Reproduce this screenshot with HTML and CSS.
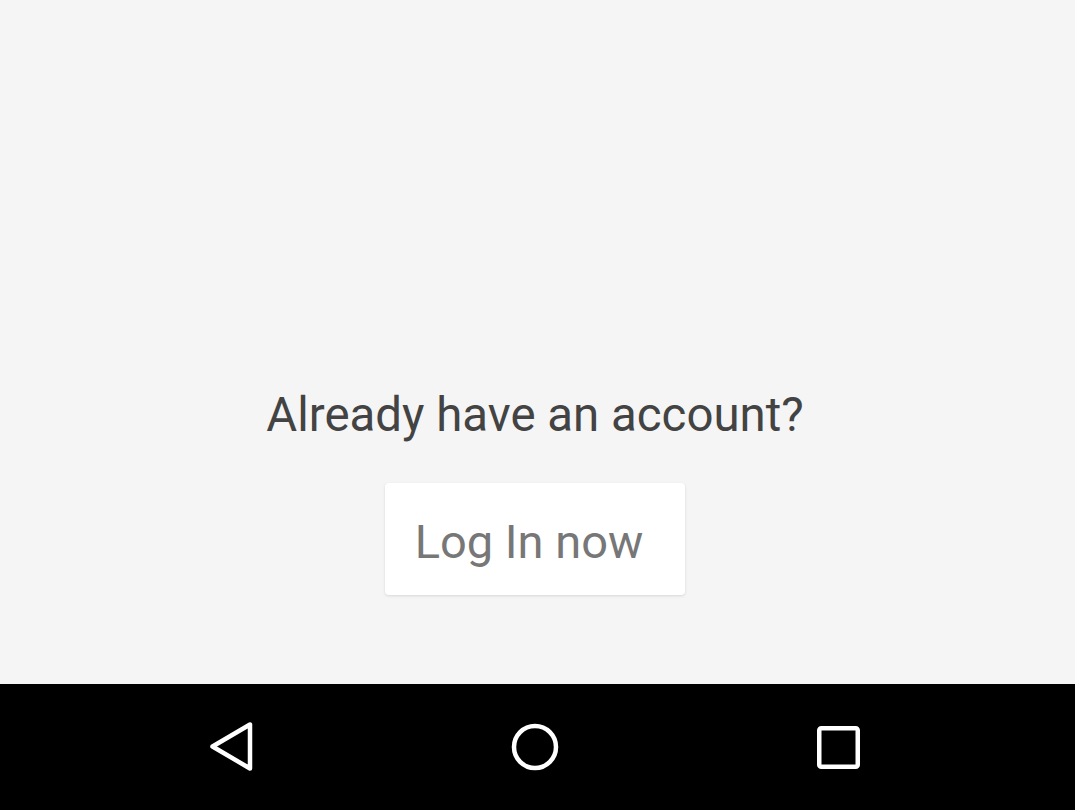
FILE: index.html
```html
<!DOCTYPE html>
<html>
<head>
<meta charset="utf-8">
<link rel="stylesheet" href="styles.css">
</head>
<body>
<div class="screen">
  <main class="content">
    <p class="prompt">Already have an account?</p>
    <button class="login">Log In now</button>
  </main>
  <nav class="navbar">
    <svg class="nav-icon" width="60" height="60" viewBox="0 0 60 60"><path d="M49 7.5 L49 51.5 L11.5 29.5 Z" fill="none" stroke="#fff" stroke-width="4.5" stroke-linejoin="round"/></svg>
    <svg class="nav-icon" width="60" height="60" viewBox="0 0 60 60"><circle cx="30" cy="30" r="21" fill="none" stroke="#fff" stroke-width="4.5"/></svg>
    <svg class="nav-icon" width="60" height="60" viewBox="0 0 60 60"><rect x="11.25" y="11.25" width="38.5" height="38.5" rx="2" fill="none" stroke="#fff" stroke-width="4.5"/></svg>
  </nav>
</div>
</body>
</html>
```
FILE: styles.css
```css
html, body {
  margin: 0;
  padding: 0;
  background: #f5f5f5;
}
.screen {
  width: 1075px;
  height: 810px;
  display: flex;
  flex-direction: column;
  font-family: Roboto, "Liberation Sans", sans-serif;
}
.content {
  flex: 0 0 684px;
  display: flex;
  flex-direction: column;
  align-items: center;
  justify-content: flex-end;
  padding: 0 5px 89px 0;
  box-sizing: border-box;
}
.prompt {
  margin: 0 0 40px;
  font-size: 47.4px;
  line-height: 56px;
  color: #434343;
}
.login {
  width: 300px;
  height: 112px;
  border: none;
  border-radius: 4px;
  background: #fff;
  box-shadow: 0 1px 3px rgba(0,0,0,0.12);
  font-family: Roboto, "Liberation Sans", sans-serif;
  font-size: 47px;
  color: #777;
  padding: 4px 12px 0 0;
}
.navbar {
  flex: 1;
  background: #000;
  display: flex;
  align-items: center;
  justify-content: space-between;
  padding: 0 207px 0 201px;
}
```
